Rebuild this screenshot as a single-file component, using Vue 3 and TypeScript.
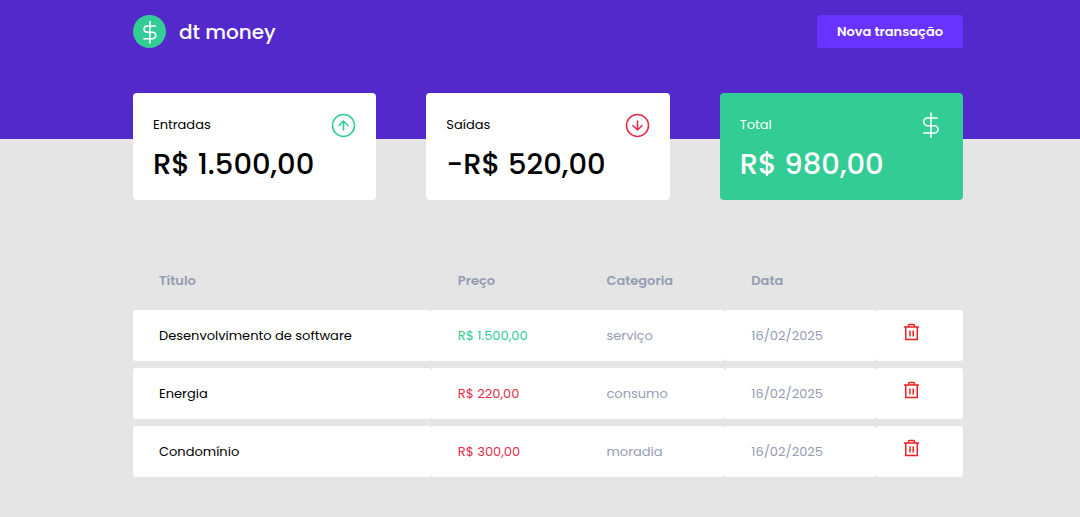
<script setup lang="ts">
interface SummaryCard {
  label: string
  value: string
  icon: 'up' | 'down' | 'dollar'
  highlight?: boolean
}

interface Transaction {
  id: number
  title: string
  price: string
  kind: 'deposit' | 'withdraw'
  category: string
  date: string
}

const cards: SummaryCard[] = [
  { label: 'Entradas', value: 'R$ 1.500,00', icon: 'up' },
  { label: 'Saídas', value: '-R$ 520,00', icon: 'down' },
  { label: 'Total', value: 'R$ 980,00', icon: 'dollar', highlight: true },
]

const transactions: Transaction[] = [
  { id: 1, title: 'Desenvolvimento de software', price: 'R$ 1.500,00', kind: 'deposit', category: 'serviço', date: '16/02/2025' },
  { id: 2, title: 'Energia', price: 'R$ 220,00', kind: 'withdraw', category: 'consumo', date: '16/02/2025' },
  { id: 3, title: 'Condomínio', price: 'R$ 300,00', kind: 'withdraw', category: 'moradia', date: '16/02/2025' },
]
</script>

<template>
  <div class="page">
    <header class="header">
      <div class="container bar">
        <div class="brand">
          <svg class="logo" viewBox="0 0 33 33" aria-hidden="true">
            <circle cx="16.5" cy="16.5" r="16.5" fill="#33cc95" />
            <path d="M16.9 6.500v21.500M22.500 11h-8.300a3.100 3.100 0 0 0 0 6.200h5.300a3.250 3.250 0 0 1 0 6.500H11" fill="none" stroke="#fff" stroke-width="1.600" stroke-linecap="round" />
          </svg>
          <span class="name">dt money</span>
        </div>
        <button type="button" class="new">Nova transação</button>
      </div>
    </header>

    <main class="content">
      <div class="container">
        <section class="summary">
          <article v-for="card in cards" :key="card.label" class="card" :class="{ highlight: card.highlight }">
            <div class="card-top">
              <p class="label">{{ card.label }}</p>
              <svg class="card-icon" viewBox="0 0 26 26" fill="none" stroke-linecap="round" stroke-linejoin="round" aria-hidden="true">
                <g v-if="card.icon === 'up'" stroke="#33cc95" stroke-width="1.600">
                  <circle cx="13.500" cy="13.500" r="11" />
                  <path d="M13.500 18V9M9 13.500 13.500 9l4.500 4.500" />
                </g>
                <g v-else-if="card.icon === 'down'" stroke="#e52e4d" stroke-width="1.600">
                  <circle cx="13.500" cy="13.500" r="11" />
                  <path d="M13.500 9v9M9 13.500l4.500 4.500 4.500-4.500" />
                </g>
                <path v-else d="M14 1v24.500M20 6h-9.500a3.850 3.850 0 0 0 0 7.700h6.800a3.700 3.700 0 0 1 0 7.400H6.800" stroke="#fff" stroke-width="1.500" />
              </svg>
            </div>
            <strong class="value">{{ card.value }}</strong>
          </article>
        </section>

        <table class="transactions">
          <thead>
            <tr>
              <th scope="col">Título</th>
              <th scope="col">Preço</th>
              <th scope="col">Categoria</th>
              <th scope="col">Data</th>
              <td class="blank"></td>
            </tr>
          </thead>
          <tbody>
            <tr v-for="item in transactions" :key="item.id">
              <td class="title">{{ item.title }}</td>
              <td class="price" :class="item.kind">{{ item.price }}</td>
              <td class="category">{{ item.category }}</td>
              <td>{{ item.date }}</td>
              <td class="action">
                <button type="button" class="remove" :aria-label="`Excluir ${item.title}`">
                  <svg width="19" height="20" viewBox="0 0 19 20" fill="none" stroke="#f02020" stroke-width="1.500" aria-hidden="true">
                    <path d="M2 5h15M3.750 5v12.500h11.500V5M6.500 5V3.500q0-1 1-1h4q1 0 1 1V5M8 8.500v6M11.200 8.500v6" />
                  </svg>
                </button>
              </td>
            </tr>
          </tbody>
        </table>
      </div>
    </main>
  </div>
</template>

<style>
body {
  margin: 0;
  background: #e5e5e5;
}
</style>

<style scoped>
.page {
  font-family: Poppins, Inter, "Open Sans", sans-serif;
  font-size: 13px;
  line-height: 20px;
  color: #000;
}

.container {
  max-width: 830px;
  margin: 0 auto;
}

.header {
  background: #5429cc;
  padding: 15px 16px 91px 32px;
}

.content {
  padding: 0 16px 0 32px;
}

.bar,
.brand,
.card-top {
  display: flex;
  align-items: center;
}

.bar,
.card-top {
  justify-content: space-between;
}

.brand {
  gap: 13px;
}

.logo {
  width: 33px;
  height: 33px;
}

.name {
  font-size: 20px;
  font-weight: 500;
  line-height: 32px;
  color: #fff;
}

.new {
  height: 33px;
  padding: 0 20px;
  border: 0;
  border-radius: 3px;
  background: #6933ff;
  color: #fff;
  font: inherit;
  font-weight: 600;
}

.summary {
  display: grid;
  grid-template-columns: repeat(3, 1fr);
  gap: 50px;
  margin-top: -46px;
}

.card {
  padding: 19px 20px 16px;
  border-radius: 4px;
  background: #fff;
}

.highlight {
  background: #33cc95;
  color: #fff;
}

.label {
  margin: 0;
}

.card-icon {
  width: 26px;
  height: 26px;
}

.value {
  display: block;
  margin-top: 6px;
  font-size: 29px;
  font-weight: 500;
  line-height: 40px;
  white-space: nowrap;
}

.transactions {
  width: 100%;
  margin-top: 52px;
  border-collapse: separate;
  border-spacing: 0 7px;
}

th,
td {
  padding: 16px 26px 15px;
  text-align: left;
  color: #969cb2;
  white-space: nowrap;
}

th {
  padding: 12px 26px;
  font-weight: 600;
}

td {
  border-radius: 3px;
  background: #fff;
}

.blank {
  background: none;
}

.title {
  color: #000;
}

.price {
  border-radius: 0;
}

.category {
  border-radius: 0 3px 3px 0;
}

.deposit {
  color: #33cc95;
}

.withdraw {
  color: #e52e4d;
}

.action {
  vertical-align: top;
  padding-top: 12px;
}

.remove {
  display: block;
  padding: 0;
  border: 0;
  background: none;
}

.remove svg {
  display: block;
}
</style>
